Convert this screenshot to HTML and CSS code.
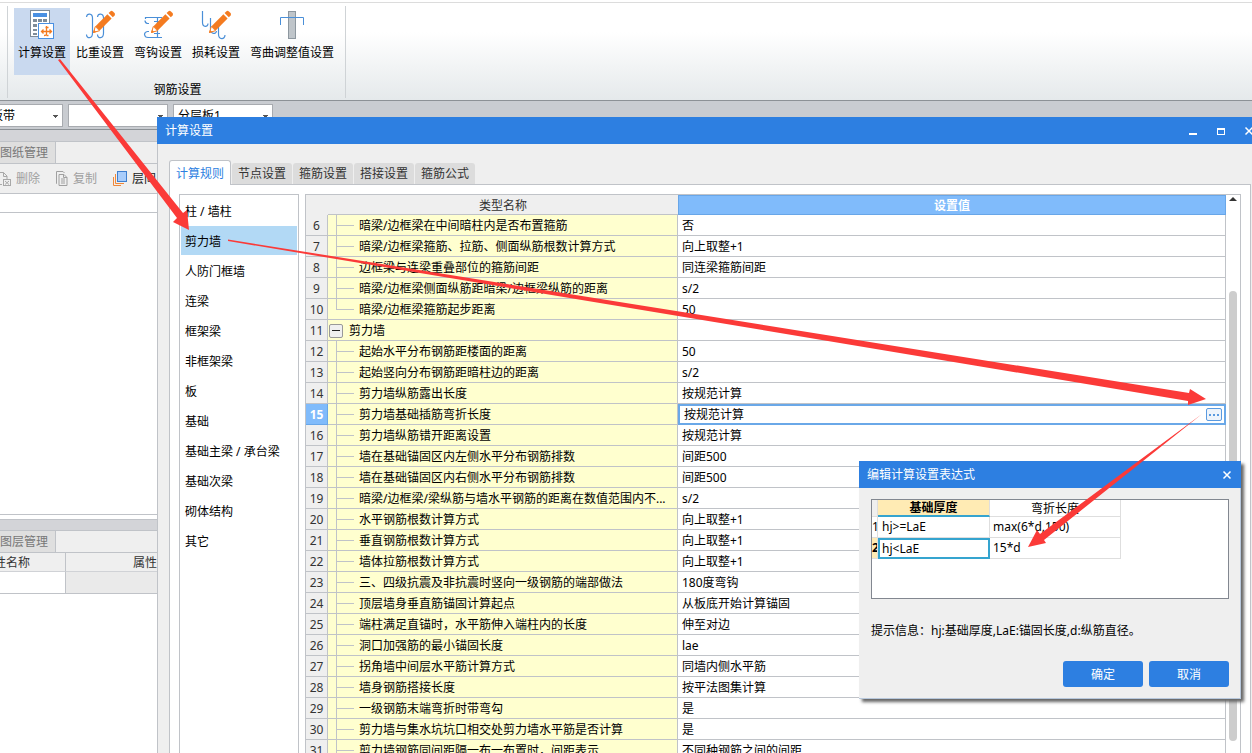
FILE: index.html
```html
<!DOCTYPE html>
<html lang="zh-CN">
<head>
<meta charset="utf-8">
<title>计算设置</title>
<link rel="stylesheet" href="styles.css">
</head>
<body>
<svg class="defs" aria-hidden="true">
  <symbol id="pencil" viewBox="0 0 32 32">
    <path d="M9.500 23.500l1.800-6 4.200 4.200z" fill="#fff" stroke="#f47b20" stroke-width="1"/>
    <path d="M11.500 17.200L23.400 5.300l4.200 4.200-11.900 11.900z" fill="#f47b20"/>
    <path d="M24.600 4.100l1.900-1.900q1.200-.8 2.400.2l1.700 1.700q.8 1.200 0 2.300l-1.800 1.900z" fill="#f47b20"/>
    <path d="M9 24l1-3.200 2.200 2.200z" fill="#f47b20"/>
  </symbol>
</svg>

<div class="app">
  <header class="ribbon">
    <section class="group">
      <div class="tools">
        <button class="tool active">
          <svg width="32" height="32" viewBox="0 0 32 32" fill="none">
            <rect x="4.500" y="1.500" width="19" height="26" fill="#fff" stroke="#7f8c99"/>
            <path d="M7 4h14v4H7z" fill="#4a90e2"/>
            <path d="M7 10h4v3H7zM12 10h4v3h-4zM17 10h4v3h-4zM7 15h4v3H7zM12 15h4v3h-4zM7 20h4v2H7zM7 24h4v2H7z" fill="#7f8c99"/>
            <rect x="12.500" y="14.500" width="15" height="15" fill="#fff" stroke="#4a90e2"/>
            <path d="M20.500 17v8q0 1.500-2.500 1.500M16 22.500h9M19.500 18.500h3M23.500 20.500l2 2-2 2M17.500 20.500l-2 2 2 2M20.500 26.500h2" stroke="#f47b20" stroke-width="1.300"/>
          </svg>
          <span>计算设置</span>
        </button>
        <button class="tool">
          <svg width="32" height="32" viewBox="0 0 32 32" fill="none">
            <path d="M2.500 8C3 4 8.500 4 8.500 9v15c0 6-6 6-6 1.500M13.500 8c.5-4 6-4 6 1v15c0 6-6 6-6 1.500" stroke="#4a8fd8" stroke-width="1.200"/>
            <use href="#pencil" width="32" height="32"/>
          </svg>
          <span>比重设置</span>
        </button>
        <button class="tool">
          <svg width="32" height="32" viewBox="0 0 32 32" fill="none">
            <path d="M3.500 10V8.500H20M15.500 8.500v20M12 12.500h6M12 24.500h6M7 14.500H5.500q-2.500-.5-2.500-3M7 22.500H5.500q-3 .5-3 3 .5 3 3.500 3h14" stroke="#4a8fd8" stroke-width="1.200"/>
            <use href="#pencil" width="32" height="32"/>
          </svg>
          <span>弯钩设置</span>
        </button>
        <button class="tool">
          <svg width="32" height="32" viewBox="0 0 32 32" fill="none">
            <path d="M2.500 2v11.500c0 5 5.500 5 5.500 1M10.500 9v11c0 5 5.500 6 6 2M18.500 17v8c0 6 6.500 6 6.500 1" stroke="#4a8fd8" stroke-width="1.200"/>
            <use href="#pencil" width="32" height="32"/>
          </svg>
          <span>损耗设置</span>
        </button>
        <button class="tool">
          <svg width="32" height="32" viewBox="0 0 32 32" fill="none">
            <rect x="12.500" y="2.500" width="7" height="27" fill="#bfc5ca" stroke="#8d979f"/>
            <path d="M4.500 16V8.500h23V16" stroke="#4a8fd8"/>
          </svg>
          <span>弯曲调整值设置</span>
        </button>
      </div>
      <div class="group-name">钢筋设置</div>
    </section>
  </header>

  <div class="selectors">
    <select class="combo combo-first" aria-label="构件类型"><option>板带</option></select>
    <select class="combo" aria-label="构件"><option></option></select>
    <select class="combo" aria-label="分层板"><option>分层板1</option></select>
  </div>

  <aside class="dock">
    <div class="dock-gap"></div>
    <div class="dock-tabs"><button class="dock-tab">图纸管理</button></div>
    <div class="dock-tools">
      <button class="dock-tool">
        <svg width="14" height="16" viewBox="0 0 14 16" fill="none" stroke="#a8a8a8"><path d="M0 1.500h5.500L9 5v3M2 13.500h2M5.500 1.500v4H9M0 6v7"/><rect x="5.500" y="8.500" width="7" height="6"/><path d="M7 10l4 3.500M11 10l-4 3.500"/></svg>
        删除</button>
      <button class="dock-tool">
        <svg width="14" height="16" viewBox="0 0 14 16" fill="none" stroke="#a0a0a0"><path d="M4 3.500h5l3 3v8H4zM2 12.500H1.500v-12H8L9.500 2M6 8h4M6 10h4M6 12h4M8.500 3.500v3H12"/></svg>
        复制</button>
      <button class="dock-tool enabled">
        <svg width="16" height="16" viewBox="0 0 16 16" fill="none"><rect x="5.500" y=".5" width="9" height="10" fill="#a9cdfb" stroke="#3f7fcf"/><path d="M3.500 3v9.500H12M1.500 6v8.500H9" stroke="#f0883a"/></svg>
        层间</button>
    </div>
    <div class="dock-line"></div>
    <div class="dock-view"></div>
    <div class="dock-gap second"></div>
    <div class="dock-tabs"><button class="dock-tab">图层管理</button></div>
    <table class="props">
      <thead><tr><th class="prop-name">属性名称</th><th>属性值</th></tr></thead>
      <tbody><tr><td></td><td class="shade"></td></tr></tbody>
    </table>
  </aside>
</div>

<main class="window">
  <div class="titlebar">
    <span class="title">计算设置</span>
    <button class="win-btn" aria-label="最小化"><svg width="10" height="10" viewBox="0 0 10 10"><path d="M1 7h8v2H1z" fill="#fff"/></svg></button>
    <button class="win-btn" aria-label="最大化"><svg width="10" height="10" viewBox="0 0 10 10"><path d="M1 2h8v7H1zM2 4v4h6V4z" fill="#fff" fill-rule="evenodd"/></svg></button>
    <button class="win-btn" aria-label="关闭"><svg width="10" height="10" viewBox="0 0 10 10"><path d="M1.500 1.500l7 7M8.500 1.500l-7 7" stroke="#fff" stroke-width="1.500"/></svg></button>
  </div>
  <div class="window-body">
    <nav class="tabs">
      <button class="tab current">计算规则</button>
      <button class="tab">节点设置</button>
      <button class="tab">箍筋设置</button>
      <button class="tab">搭接设置</button>
      <button class="tab">箍筋公式</button>
    </nav>
    <div class="panel">
      <ul class="categories">
        <li>柱 / 墙柱</li>
        <li class="selected">剪力墙</li>
        <li>人防门框墙</li>
        <li>连梁</li>
        <li>框架梁</li>
        <li>非框架梁</li>
        <li>板</li>
        <li>基础</li>
        <li>基础主梁 / 承台梁</li>
        <li>基础次梁</li>
        <li>砌体结构</li>
        <li>其它</li>
      </ul>
      <div class="grid-box">
        <table class="grid">
          <colgroup><col class="c-num"><col class="c-name"><col></colgroup>
          <thead><tr><th></th><th>类型名称</th><th class="th-value">设置值</th></tr></thead>
          <tbody>
            <tr><th>6</th><td class="leaf"><span>暗梁/边框梁在中间暗柱内是否布置箍筋</span></td><td>否</td></tr>
            <tr><th>7</th><td class="leaf"><span>暗梁/边框梁箍筋、拉筋、侧面纵筋根数计算方式</span></td><td>向上取整+1</td></tr>
            <tr><th>8</th><td class="leaf"><span>边框梁与连梁重叠部位的箍筋间距</span></td><td>同连梁箍筋间距</td></tr>
            <tr><th>9</th><td class="leaf"><span>暗梁/边框梁侧面纵筋距暗梁/边框梁纵筋的距离</span></td><td>s/2</td></tr>
            <tr><th>10</th><td class="leaf last"><span>暗梁/边框梁箍筋起步距离</span></td><td>50</td></tr>
            <tr><th>11</th><td class="parent"><div class="parent-row"><button class="toggle" aria-label="折叠"></button>剪力墙</div></td><td></td></tr>
            <tr><th>12</th><td class="leaf"><span>起始水平分布钢筋距楼面的距离</span></td><td>50</td></tr>
            <tr><th>13</th><td class="leaf"><span>起始竖向分布钢筋距暗柱边的距离</span></td><td>s/2</td></tr>
            <tr><th>14</th><td class="leaf"><span>剪力墙纵筋露出长度</span></td><td>按规范计算</td></tr>
            <tr class="editing"><th>15</th><td class="leaf"><span>剪力墙基础插筋弯折长度</span></td><td><div class="editor"><span>按规范计算</span><button class="more" aria-label="编辑"><svg width="10" height="2" viewBox="0 0 10 2"><path d="M0 0h2v2H0zM4 0h2v2H4zM8 0h2v2H8z" fill="#5a9ae0"/></svg></button></div></td></tr>
            <tr><th>16</th><td class="leaf"><span>剪力墙纵筋错开距离设置</span></td><td>按规范计算</td></tr>
            <tr><th>17</th><td class="leaf"><span>墙在基础锚固区内左侧水平分布钢筋排数</span></td><td>间距500</td></tr>
            <tr><th>18</th><td class="leaf"><span>墙在基础锚固区内右侧水平分布钢筋排数</span></td><td>间距500</td></tr>
            <tr><th>19</th><td class="leaf"><span>暗梁/边框梁/梁纵筋与墙水平钢筋的距离在数值范围内不...</span></td><td>s/2</td></tr>
            <tr><th>20</th><td class="leaf"><span>水平钢筋根数计算方式</span></td><td>向上取整+1</td></tr>
            <tr><th>21</th><td class="leaf"><span>垂直钢筋根数计算方式</span></td><td>向上取整+1</td></tr>
            <tr><th>22</th><td class="leaf"><span>墙体拉筋根数计算方式</span></td><td>向上取整+1</td></tr>
            <tr><th>23</th><td class="leaf"><span>三、四级抗震及非抗震时竖向一级钢筋的端部做法</span></td><td>180度弯钩</td></tr>
            <tr><th>24</th><td class="leaf"><span>顶层墙身垂直筋锚固计算起点</span></td><td>从板底开始计算锚固</td></tr>
            <tr><th>25</th><td class="leaf"><span>端柱满足直锚时，水平筋伸入端柱内的长度</span></td><td>伸至对边</td></tr>
            <tr><th>26</th><td class="leaf"><span>洞口加强筋的最小锚固长度</span></td><td>lae</td></tr>
            <tr><th>27</th><td class="leaf"><span>拐角墙中间层水平筋计算方式</span></td><td>同墙内侧水平筋</td></tr>
            <tr><th>28</th><td class="leaf"><span>墙身钢筋搭接长度</span></td><td>按平法图集计算</td></tr>
            <tr><th>29</th><td class="leaf"><span>一级钢筋末端弯折时带弯勾</span></td><td>是</td></tr>
            <tr><th>30</th><td class="leaf"><span>剪力墙与集水坑坑口相交处剪力墙水平筋是否计算</span></td><td>是</td></tr>
            <tr><th>31</th><td class="leaf"><span>剪力墙钢筋同间距隔一布一布置时，间距表示</span></td><td>不同种钢筋之间的间距</td></tr>
          </tbody>
        </table>
        <div class="scrollbar">
          <svg width="8" height="4" viewBox="0 0 8 4"><path d="M4 0l4 4H0z" fill="#333"/></svg>
          <div class="thumb"></div>
        </div>
      </div>
    </div>
  </div>
</main>

<section class="dialog" role="dialog" aria-label="编辑计算设置表达式">
  <div class="titlebar">
    <span class="title">编辑计算设置表达式</span>
    <button class="win-btn" aria-label="关闭"><svg width="10" height="10" viewBox="0 0 10 10"><path d="M1.500 1.500l7 7M8.500 1.500l-7 7" stroke="#fff" stroke-width="1.500"/></svg></button>
  </div>
  <div class="dialog-body">
    <div class="sheet-box">
      <table class="sheet">
        <colgroup><col class="s-num"><col class="s-a"><col class="s-b"></colgroup>
        <thead><tr><th></th><th class="hot">基础厚度</th><th>弯折长度</th></tr></thead>
        <tbody>
          <tr><th>1</th><td>hj&gt;=LaE</td><td>max(6*d,150)</td></tr>
          <tr><th class="hot">2</th><td class="cursor">hj&lt;LaE</td><td>15*d</td></tr>
        </tbody>
      </table>
    </div>
    <p class="hint">提示信息：hj:基础厚度,LaE:锚固长度,d:纵筋直径。</p>
    <div class="actions">
      <button class="primary">确定</button>
      <button class="primary">取消</button>
    </div>
  </div>
</section>

<svg class="arrows" width="1252" height="753" viewBox="0 0 1252 753" fill="#fb3a38" aria-hidden="true">
  <path d="M58 60l2-1L183 213l4-3 2 20-16-8 4-4z"/>
  <path d="M228 239.500L1189 393l1-4 16 10-18 6v-4L228 241z"/>
  <path d="M1202 414L1044 540l2 3-18 4 9-17 3 4z"/>
</svg>
</body>
</html>
```

FILE: styles.css
```css
* { box-sizing: border-box; }

body {
  margin: 0;
  height: 100vh;
  overflow: hidden;
  position: relative;
  background: #fff;
  color: #000;
  font: 12px/18px "Noto Sans", "Noto Sans CJK SC", sans-serif;
}

button, select {
  font: inherit;
  color: inherit;
  border: 0;
  padding: 0;
  margin: 0;
  background: none;
  white-space: nowrap;
}

table { border-collapse: separate; border-spacing: 0; table-layout: fixed; }
th, td { padding: 0; font-weight: normal; text-align: left; white-space: nowrap; overflow: hidden; }
svg { display: block; flex: none; }

.defs { position: absolute; width: 0; height: 0; }

.app { height: 100%; padding-top: 2px; display: flex; flex-direction: column; }

/* Ribbon */
.ribbon {
  flex: none;
  height: 99px;
  padding: 3px 0 2px 7px;
  border-top: 1px solid #dcdcdc;
  border-bottom: 1px solid #8c9196;
  background: linear-gradient(#fff 30%, #e5e9eb);
  display: flex;
}
.group {
  padding: 2px 7px 0 6px;
  border: solid #cfd3d6;
  border-width: 0 1px;
  display: flex;
  flex-direction: column;
}
.tools { display: flex; gap: 2px; }
.tool {
  height: 67px;
  padding: 1px 4px 0;
  display: flex;
  flex-direction: column;
  align-items: center;
  gap: 3px;
}
.tool.active { background: #c9d9ef; }
.group-name { margin-top: 6px; padding-left: 3px; text-align: center; }

/* Selector strip */
.selectors {
  flex: none;
  height: 29px;
  padding: 3px 0;
  background: #c9ccd1;
  border-bottom: 1px solid #8c9196;
  display: flex;
  gap: 5px;
}
.combo {
  appearance: none;
  width: 100px;
  height: 23px;
  padding-left: 4px;
  border: 1px solid #a8abb0;
  border-radius: 0;
  background: linear-gradient(#555, #555) 89px 10px / 5px 1px no-repeat,
              linear-gradient(#555, #555) 90px 11px / 3px 1px no-repeat,
              linear-gradient(#555, #555) 91px 12px / 1px 1px no-repeat,
              #fff;
}
.combo-first { margin-left: -37px; padding-left: 27px; }

/* Left dock */
.dock {
  flex: 1;
  min-height: 0;
  width: 168px;
  display: flex;
  flex-direction: column;
  overflow: hidden;
}
.dock-gap { flex: none; height: 12px; background: #d3d4d8; border-bottom: 1px solid #c0c3c8; }
.dock-gap.second { margin-top: 4px; border-top: 1px solid #c0c3c8; }
.dock-tabs { flex: none; height: 22px; display: flex; background: #efefef; border-bottom: 1px solid #c0c3c8; }
.dock-tab { padding-right: 7px; color: #777; background: #dfdfdf; border-right: 1px solid #c0c3c8; }
.dock-tools {
  flex: none;
  height: 30px;
  background: #efefef;
  border-bottom: 1px solid #c0c3c8;
  display: flex;
  align-items: center;
  gap: 15px;
}
.dock-tool { display: flex; align-items: center; gap: 4px; color: #a0a0a0; }
.dock-tool:first-child { margin-left: -2px; }
.dock-tool.enabled { color: #222; }
.dock-line { flex: none; height: 19px; border-bottom: 1px solid #c0c3c8; }
.dock-view { flex: none; height: 302px; border-bottom: 1px solid #c0c3c8; }
.props { flex: none; width: 186px; margin-left: -18px; }
.props th { height: 19px; padding-top: 2px; line-height: 16px; background: #efefef; color: #333; border-bottom: 1px solid #d0d2d6; }
.props th.prop-name { width: 84px; border-right: 1px solid #c0c3c8; }
.props th + th { padding-left: 67px; }
.props td { height: 22px; border-bottom: 1px solid #c0c3c8; border-right: 1px solid #c0c3c8; }
.shade { background: #eaeaea; }

/* Windows */
.window {
  position: absolute;
  left: 157px;
  top: 117px;
  right: -16px;
  bottom: -24px;
  background: #efefef;
  border-left: 1px solid #c0c3c8;
  display: flex;
  flex-direction: column;
}
.titlebar {
  flex: none;
  height: 27px;
  padding: 0 14px 0 8px;
  margin-left: -1px;
  background: #2d7fe1;
  color: #fff;
  display: flex;
  align-items: center;
  gap: 18px;
}
.title { flex: 1; }
.win-btn { width: 10px; height: 10px; }

.window-body {
  flex: 1;
  min-height: 0;
  padding: 16px 17px 0 11px;
  display: flex;
  flex-direction: column;
}
.tabs { flex: none; height: 25px; display: flex; align-items: flex-end; gap: 1px; position: relative; }
.tab { width: 60px; height: 21px; margin-bottom: 1px; padding-top: 1px; color: #333; background: #dcdcdc; border-radius: 3px 3px 0 0; }
.tab.current {
  width: 62px;
  height: 25px;
  margin-bottom: 0;
  color: #2d7fe1;
  background: #fff;
  border: 1px solid #c0c3c8;
  border-bottom: 0;
}
.panel {
  flex: 1;
  min-height: 0;
  margin-top: -1px;
  padding: 9px 9px 0 9px;
  background: #fff;
  border: 1px solid #c0c3c8;
  display: flex;
  gap: 6px;
}
.categories {
  flex: none;
  width: 120px;
  margin: 0;
  padding: 1px 1px 0;
  list-style: none;
  border: 1px solid #c0c3c8;
}
.categories li { height: 30px; padding: 2px 0 0 4px; line-height: 28px; }
.categories .selected { background: #b2d9f5; border-bottom: 1px solid #fff; }

.grid-box { flex: 1; min-width: 0; border: 1px solid #c0c3c8; display: flex; overflow: hidden; }
.grid { flex: 1; width: 0; align-self: flex-start; }
.c-num { width: 22px; }
.c-name { width: 350px; }
.grid thead th { height: 20px; padding-top: 2px; line-height: 16px; background: #efefef; border-bottom: 1px solid #c0c3c8; text-align: center; color: #333; }
.grid thead th:first-child { border-bottom-color: #efefef; }
.grid thead .th-value { padding-top: 1px; background: #80bbfb; border: 1px solid #68a6e8; color: #fff; font-weight: bold; }
.grid tbody th { height: 21px; padding-top: 2px; line-height: 18px; text-align: center; color: #333; background: #efefef; border: solid #c0c3c8; border-width: 0 1px 1px 0; }
.grid td { height: 21px; line-height: 18px; padding: 2px 0 0 4px; border: solid #c0c3c8; border-width: 0 1px 1px 0; }
.grid td.leaf, .grid td.parent { background-color: #ffffcf; }
.grid td.leaf {
  padding-left: 31px;
  background-image: linear-gradient(#c0c3c8, #c0c3c8), linear-gradient(#c0c3c8, #c0c3c8);
  background-size: 1px 100%, 17px 1px;
  background-position: 8px 0, 9px 10px;
  background-repeat: no-repeat;
}
.grid td.last { background-size: 1px 11px, 17px 1px; }
.grid td.parent { padding: 1px 0 0 1px; }
.parent-row { display: flex; align-items: center; gap: 6px; height: 19px; }
.toggle {
  width: 14px;
  height: 14px;
  border: 1px solid #999;
  border-radius: 2px;
  background: linear-gradient(#222, #222) center / 8px 1px no-repeat, #f0f0f0;
}
.grid .editing th { background: #80bbfb; border-color: #68a6e8; color: #fff; font-weight: bold; }
.grid .editing td:last-child { padding: 0; border: 0; }
.editor {
  height: 21px;
  padding: 0 2px 0 4px;
  border: 2px solid #6aa8e8;
  line-height: 17px;
  display: flex;
  align-items: center;
  justify-content: space-between;
}
.more { width: 16px; height: 13px; border: 1px solid #5a9ae0; border-radius: 2px; background: #eef4fb; display: flex; align-items: center; justify-content: center; }

.scrollbar { flex: none; width: 14px; padding: 2px 3px; display: flex; flex-direction: column; align-items: center; }
.thumb { width: 8px; height: 450px; margin-top: 90px; flex: none; border-radius: 4px; background: #cdcdcd; }

/* Expression dialog */
.dialog {
  position: absolute;
  left: 859px;
  top: 461px;
  width: 382px;
  background: #efefef;
  border: solid #b8c8dc;
  border-width: 0 1px 1px 0;
  box-shadow: 3px 3px 3px #666;
}
.dialog .titlebar { margin: 0 -1px 0 0; padding-right: 9px; }
.dialog-body { padding: 11px 11px 11px 12px; }
.sheet-box { height: 100px; background: #fff; border: 1px solid #828790; }
.sheet { width: 249px; }
.s-num { width: 6px; }
.s-a { width: 112px; }
.s-b { width: 131px; }
.sheet th, .sheet td { height: 21px; line-height: 20px; border: solid #dedede; border-width: 0 1px 1px 0; }
.sheet td { padding-left: 4px; }
.sheet td + td { padding-left: 3px; }
.sheet thead th { height: 17px; padding-top: 1px; line-height: 14px; text-align: center; }
.sheet thead th:first-child { background: #efefef; }
.sheet thead .hot { background: #ffebb4; border-bottom: 2px solid #35a4cf; font-weight: bold; }
.sheet tbody .hot { background: #ffebb4; font-weight: bold; }
.sheet .cursor { border: 2px solid #35a4cf; padding-left: 2px; line-height: 17px; }
.hint { margin: 23px 0 21px; }
.actions { display: flex; justify-content: flex-end; gap: 6px; }
.primary { width: 80px; height: 26px; padding-top: 1px; border-radius: 3px; background: #2d7fe1; color: #fff; }

.arrows { position: absolute; left: 0; top: 0; pointer-events: none; }
```
